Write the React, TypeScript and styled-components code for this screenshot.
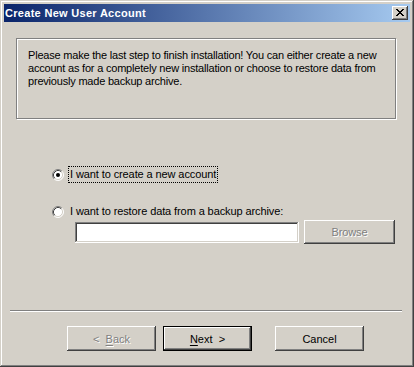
import styled, { createGlobalStyle } from "styled-components";

const GlobalStyle = createGlobalStyle`
  html, body {
    margin: 0;
    padding: 0;
    background: #d4d0c8;
  }
  * {
    box-sizing: border-box;
  }
`;

function Radio({ checked }: { checked?: boolean }) {
  return (
    <svg width="12" height="12" viewBox="0 0 12 12">
      <circle cx="6" cy="6" r="5" fill="#fff" />
      <path d="M2.11 9.89 A5.5 5.5 0 0 1 9.89 2.11" fill="none" stroke="#808080" />
      <path d="M9.89 2.11 A5.5 5.5 0 0 1 2.11 9.89" fill="none" stroke="#fff" />
      <path d="M2.82 9.18 A4.5 4.5 0 0 1 9.18 2.82" fill="none" stroke="#404040" />
      <path d="M9.18 2.82 A4.5 4.5 0 0 1 2.82 9.18" fill="none" stroke="#d4d0c8" />
      {checked && <circle cx="6" cy="6" r="2" fill="#000" />}
    </svg>
  );
}

export default function App() {
  return (
    <>
      <GlobalStyle />
      <Window>
        <TitleBar>
          <TitleText>Create New User Account</TitleText>
          <CloseButton>
            <svg width="8" height="7" viewBox="0 0 8 7">
              <path
                d="M0 0h2v1h1v1h2v-1h1v-1h2v1h-1v1h-1v1h-1v1h1v1h1v1h1v1h-2v-1h-1v-1h-2v1h-1v1h-2v-1h1v-1h1v-1h1v-1h-1v-1h-1v-1h-1z"
                fill="#000"
              />
            </svg>
          </CloseButton>
        </TitleBar>
        <Body>
          <InfoBox>
            Please make the last step to finish installation! You can either create a new
            <br />
            account as for a completely new installation or choose to restore data from
            <br />
            previously made backup archive.
          </InfoBox>
          <Options>
            <RadioRow>
              <Radio checked />
              <RadioLabel $focused>I want to create a new account</RadioLabel>
            </RadioRow>
            <RadioRow $gap>
              <Radio />
              <RadioLabel>I want to restore data from a backup archive:</RadioLabel>
            </RadioRow>
            <PathRow>
              <PathInput />
              <Button $disabled $width={91}>
                Browse
              </Button>
            </PathRow>
          </Options>
          <Footer>
            <Separator />
            <ButtonRow>
              <Button $disabled>
                &lt;&nbsp;&nbsp;<u>B</u>ack
              </Button>
              <Button $default>
                <u>N</u>ext&nbsp;&nbsp;&gt;
              </Button>
              <Button $spaced>Cancel</Button>
            </ButtonRow>
          </Footer>
        </Body>
      </Window>
    </>
  );
}

const Window = styled.div`
  width: 414px;
  height: 367px;
  padding: 4px;
  background: #d4d0c8;
  display: flex;
  flex-direction: column;
  box-shadow: inset -1px -1px #404040, inset 1px 1px #d4d0c8,
    inset -2px -2px #808080, inset 2px 2px #fff;
  font-family: "Liberation Sans", Arial, sans-serif;
  font-size: 11px;
  color: #000;
`;

const TitleBar = styled.div`
  height: 18px;
  display: flex;
  align-items: center;
  justify-content: space-between;
  padding: 0 2px 0 1px;
  background: linear-gradient(to right, #0a246a, #a6caf0);
`;

const TitleText = styled.span`
  color: #fff;
  font-weight: bold;
  font-size: 11px;
  letter-spacing: 0.3px;
  line-height: 18px;
`;

const CloseButton = styled.div`
  width: 16px;
  height: 14px;
  display: flex;
  align-items: center;
  justify-content: center;
  background: #d4d0c8;
  box-shadow: inset -1px -1px #404040, inset 1px 1px #fff,
    inset -2px -2px #808080, inset 2px 2px #d4d0c8;
  padding-bottom: 1px;
`;

const Body = styled.div`
  flex: 1;
  display: flex;
  flex-direction: column;
`;

const InfoBox = styled.div`
  margin: 16px 0 0 12px;
  width: 380px;
  height: 81px;
  padding: 10px 0 0 11px;
  border: 1px solid #808080;
  box-shadow: 1px 1px 0 #fff, inset 1px 1px 0 #fff;
  line-height: 13px;
  letter-spacing: -0.2px;
  white-space: nowrap;
`;

const Options = styled.div`
  display: flex;
  flex-direction: column;
  margin-top: 47px;
  letter-spacing: -0.1px;
`;

const RadioRow = styled.div<{ $gap?: boolean }>`
  display: flex;
  align-items: center;
  height: 17px;
  gap: 4px;
  margin: ${(p) => (p.$gap ? "20px" : "0")} 0 0 48px;
`;

const RadioLabel = styled.span<{ $focused?: boolean }>`
  line-height: 15px;
  padding: 0 1px;
  border: 1px dotted ${(p) => (p.$focused ? "#000" : "transparent")};
`;

const PathRow = styled.div`
  display: flex;
  align-items: center;
  margin: 0 0 0 71px;
  gap: 5px;
`;

const PathInput = styled.div`
  width: 224px;
  height: 21px;
  background: #fff;
  box-shadow: inset -1px -1px #fff, inset 1px 1px #808080,
    inset -2px -2px #d4d0c8, inset 2px 2px #404040;
`;

const Footer = styled.div`
  margin-top: auto;
  padding-bottom: 12px;
`;

const Separator = styled.div`
  margin: 0 8px 0 6px;
  height: 2px;
  border-top: 1px solid #808080;
  border-bottom: 1px solid #fff;
`;

const ButtonRow = styled.div`
  display: flex;
  gap: 7px;
  margin-top: 14px;
  padding-left: 63px;
`;

const Button = styled.div<{
  $disabled?: boolean;
  $default?: boolean;
  $spaced?: boolean;
  $width?: number;
}>`
  width: ${(p) => p.$width ?? 89}px;
  height: ${(p) => (p.$width ? 24 : 25)}px;
  margin-left: ${(p) => (p.$spaced ? "16px" : "0")};
  display: flex;
  align-items: center;
  justify-content: center;
  background: #d4d0c8;
  color: ${(p) => (p.$disabled ? "#808080" : "#000")};
  text-shadow: ${(p) => (p.$disabled ? "1px 1px 0 #fff" : "none")};
  box-shadow: ${(p) =>
    p.$default
      ? "inset 0 0 0 1px #000, inset -2px -2px #404040, inset 2px 2px #fff, inset -3px -3px #808080"
      : "inset -1px -1px #404040, inset 1px 1px #fff, inset -2px -2px #808080"};
  u {
    text-decoration-thickness: 1px;
    text-underline-offset: 2px;
  }
`;
